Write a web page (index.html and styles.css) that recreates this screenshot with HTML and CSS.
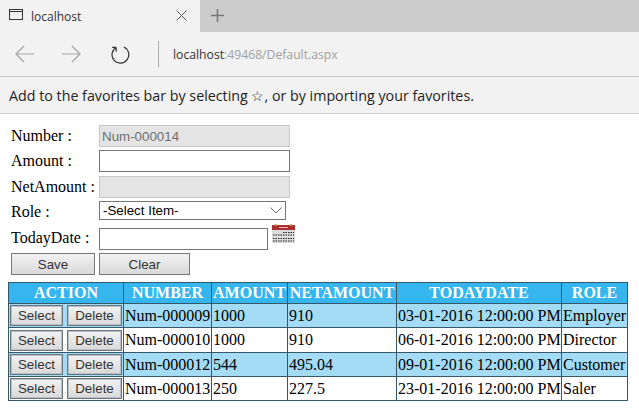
FILE: index.html
```html
<!DOCTYPE html>
<html>

<head>
    <title>localhost</title>
    <link rel="stylesheet" href="styles.css">
</head>

<body>
    <div class="tabstrip">
        <div class="tab">
            <svg class="tab-icon" width="15" height="13" viewBox="0 0 15 13">
                <rect x="0.5" y="1.5" width="13" height="10" fill="none" stroke="#333" />
                <path d="M1 3.5H14" stroke="#333" />
            </svg>
            <span class="tab-title">localhost</span>
            <svg class="tab-close" width="11" height="11" viewBox="0 0 11 11">
                <path d="M0.5 0.5L10.5 10.5M10.5 0.5L0.5 10.5" stroke="#555" />
            </svg>
        </div>
        <svg class="new-tab" width="13" height="13" viewBox="0 0 13 13">
            <path d="M6.5 0V13M0 6.5H13" stroke="#777" stroke-width="1.5" />
        </svg>
    </div>

    <div class="toolbar">
        <svg class="nav-icon" width="19" height="18" viewBox="0 0 19 18">
            <path d="M19 9H1M9 1L1 9L9 17" fill="none" stroke="#a6a6a6" stroke-width="1.2" />
        </svg>
        <svg class="nav-icon" width="19" height="18" viewBox="0 0 19 18">
            <path d="M0 9H18M10 1L18 9L10 17" fill="none" stroke="#a6a6a6" stroke-width="1.2" />
        </svg>
        <svg class="nav-icon" width="19" height="19" viewBox="0 0 19 19">
            <path d="M5.2 2.4A8.4 8.4 0 1 0 12.8 2M5.2 2.4V6.8M5.2 2.4H1.2" fill="none" stroke="#333" stroke-width="1.2" />
        </svg>
        <div class="divider"></div>
        <div class="address">localhost<span class="address-rest">:49468/Default.aspx</span></div>
    </div>

    <div class="favbar">Add to the favorites bar by selecting ☆, or by importing your favorites.</div>

    <div class="page">
        <form class="entry">
            <label>Number :</label>
            <input class="field field-off" type="text" value="Num-000014" disabled>
            <label>Amount :</label>
            <input class="field" type="text">
            <label>NetAmount :</label>
            <input class="field field-off" type="text" disabled>
            <label>Role :</label>
            <div class="select">
                <span>-Select Item-</span>
                <svg width="12" height="7" viewBox="0 0 12 7">
                    <path d="M0.5 0.5L6 6L11.5 0.5" fill="none" stroke="#666" />
                </svg>
            </div>
            <label class="date-label">TodayDate :</label>
            <div class="date-wrap">
                <input class="field date-field" type="text">
                <svg class="calendar" width="23" height="19" viewBox="0 0 23 19">
                    <rect x="0" y="1" width="23" height="18" fill="#dcdcdc" />
                    <rect x="0" y="1" width="23" height="5" fill="#a92f2f" />
                    <rect x="7" y="3" width="9" height="1" fill="#e8b8b8" />
                    <rect x="3" y="0" width="2" height="2" fill="#c9a55a" />
                    <rect x="18" y="0" width="2" height="2" fill="#c9a55a" />
                    <path d="M11 8.5H22M1 11H22M1 14.5H22M1 17H22" stroke="#222" stroke-dasharray="1.5 1" />
                </svg>
            </div>
            <div class="actions">
                <button class="btn btn-save" type="button">Save</button>
                <button class="btn btn-clear" type="button">Clear</button>
            </div>
        </form>

        <table class="grid">
            <colgroup>
                <col class="c-action">
                <col class="c-number">
                <col class="c-amount">
                <col class="c-net">
                <col class="c-date">
                <col class="c-role">
            </colgroup>
            <thead>
                <tr>
                    <th>ACTION</th>
                    <th>NUMBER</th>
                    <th>AMOUNT</th>
                    <th>NETAMOUNT</th>
                    <th>TODAYDATE</th>
                    <th>ROLE</th>
                </tr>
            </thead>
            <tbody>
                <tr class="alt">
                    <td class="cmd"><button class="btn btn-row" type="button">Select</button><button class="btn btn-row" type="button">Delete</button></td>
                    <td>Num-000009</td>
                    <td>1000</td>
                    <td>910</td>
                    <td>03-01-2016 12:00:00 PM</td>
                    <td>Employer</td>
                </tr>
                <tr class="tall">
                    <td class="cmd"><button class="btn btn-row" type="button">Select</button><button class="btn btn-row" type="button">Delete</button></td>
                    <td>Num-000010</td>
                    <td>1000</td>
                    <td>910</td>
                    <td>06-01-2016 12:00:00 PM</td>
                    <td>Director</td>
                </tr>
                <tr class="alt">
                    <td class="cmd"><button class="btn btn-row" type="button">Select</button><button class="btn btn-row" type="button">Delete</button></td>
                    <td>Num-000012</td>
                    <td>544</td>
                    <td>495.04</td>
                    <td>09-01-2016 12:00:00 PM</td>
                    <td>Customer</td>
                </tr>
                <tr>
                    <td class="cmd"><button class="btn btn-row" type="button">Select</button><button class="btn btn-row" type="button">Delete</button></td>
                    <td>Num-000013</td>
                    <td>250</td>
                    <td>227.5</td>
                    <td>23-01-2016 12:00:00 PM</td>
                    <td>Saler</td>
                </tr>
            </tbody>
        </table>
    </div>
</body>

</html>
```

FILE: styles.css
```css
* {
    box-sizing: border-box;
}

html,
body {
    margin: 0;
    padding: 0;
    height: 100%;
    overflow: hidden;
}

body {
    background-color: white;
    font-family: "Liberation Serif", serif;
    font-size: 16px;
    color: black;
}

/* browser chrome */
.tabstrip {
    height: 32px;
    display: flex;
    align-items: center;
    background-color: #cccccc;
}

.tab {
    width: 200px;
    height: 32px;
    display: flex;
    align-items: center;
    padding: 0 13px 0 9px;
    background-color: #f2f2f2;
}

.tab-icon {
    margin-right: 7px;
    margin-top: -3px;
}

.tab-title {
    flex: 1;
    font-family: "Open Sans", sans-serif;
    font-size: 12px;
    color: #333;
}

.tab-close {
    margin-top: -2px;
}

.new-tab {
    margin-left: 11px;
    margin-top: -2px;
}

.toolbar {
    height: 45px;
    display: flex;
    align-items: center;
    padding-left: 15px;
    background-color: #f2f2f2;
    border-bottom: 1px solid #c9c9c9;
}

.nav-icon:nth-child(2) {
    margin-left: 28px;
}

.nav-icon:nth-child(3) {
    margin-left: 30px;
}

.divider {
    width: 1px;
    height: 26px;
    margin-left: 28px;
    background-color: #aaa;
}

.address {
    margin-left: 14px;
    font-family: "Open Sans", sans-serif;
    font-size: 12.2px;
    color: #333;
}

.address-rest {
    color: #a0a0a0;
}

.favbar {
    height: 37px;
    padding-left: 9px;
    display: flex;
    align-items: center;
    background-color: #f2f2f2;
    border-bottom: 1px solid #d0d0d0;
    font-family: "Open Sans", sans-serif;
    font-size: 14.28px;
    color: #222;
}

/* form */
.page {
    padding: 11px 0 0 8px;
}

.entry {
    display: grid;
    grid-template-columns: 88px 200px;
    grid-template-rows: 25px 26px 25px 27px 25px 22px;
    padding-left: 3px;
    align-items: start;
    line-height: 21px;
}

.date-label {
    margin-top: -1px;
}

.field {
    height: 22px;
    width: 191px;
    border: 1px solid #767676;
    background-color: white;
    padding: 1px 2px;
    font-family: "Liberation Sans", sans-serif;
    font-size: 13.33px;
}

.field-off {
    border-color: #c8c8c8;
    background-color: #e4e4e4;
    color: #6f6f6f;
}

.select {
    width: 187px;
    height: 19px;
    display: flex;
    align-items: center;
    justify-content: space-between;
    padding: 0 3px;
    border: 1px solid #767676;
    font-family: "Liberation Sans", sans-serif;
    font-size: 13.33px;
}

.date-wrap {
    display: flex;
    align-items: flex-start;
}

.date-field {
    width: 169px;
}

.calendar {
    margin: -4px 0 0 4px;
}

.actions {
    grid-column: 1 / 3;
    display: flex;
}

.btn {
    height: 22px;
    padding: 0;
    border: 1px solid #777;
    background: linear-gradient(#f2f2f2, #d9d9d9);
    font-family: "Liberation Sans", sans-serif;
    font-size: 13.33px;
    color: #333;
}

.btn-save {
    width: 84px;
    margin-right: 4px;
}

.btn-clear {
    width: 91px;
}

/* data table */
.grid {
    width: 620px;
    margin-top: 7px;
    table-layout: fixed;
    border-collapse: collapse;
    border: 1px solid #5f6b72;
}

.c-action {
    width: 115px;
}

.c-number {
    width: 88px;
}

.c-amount {
    width: 76px;
}

.c-net {
    width: 109px;
}

.c-date {
    width: 165px;
}

.c-role {
    width: 66px;
}

.grid th,
.grid td {
    padding: 0 1px;
    border: 1px solid #35596b;
    white-space: nowrap;
    overflow: hidden;
}

.grid th {
    height: 21px;
    background-color: #36b6ee;
    color: white;
    font-weight: bold;
    text-align: center;
}

.grid td {
    height: 24px;
    font-size: 16px;
}

.grid .tall td {
    height: 25px;
}

.alt td {
    background-color: #a3dcf4;
}

.grid .cmd {
    padding: 0 0 0 1px;
    background-color: white;
}

.alt .cmd {
    background-color: #a3dcf4;
}

.btn-row {
    width: 53px;
    height: 21px;
    margin-right: 4px;
    border: 1px solid #68757c;
    box-shadow: inset 0 0 0 1px #b9bfc2;
}

.btn-row + .btn-row {
    width: 55px;
    margin-right: 0;
}
```
